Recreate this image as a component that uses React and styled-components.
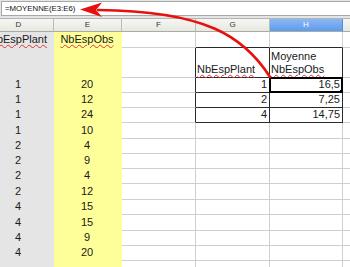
import React from 'react';
import styled, { createGlobalStyle } from 'styled-components';

const GlobalStyle = createGlobalStyle`
  html, body {
    margin: 0;
    padding: 0;
    background: #fff;
  }
  body {
    font-family: "Liberation Sans", Arial, sans-serif;
  }
`;

const Window = styled.div`
  position: relative;
  width: 350px;
  height: 267px;
  overflow: hidden;
  background: #fff;
`;

const FormulaBar = styled.div`
  background: #e4e4e4;
  padding: 1px 0 2px 1px;
  border-bottom: 1px solid #b4b4b4;
`;

const FormulaInput = styled.div`
  height: 13px;
  margin-right: -2px;
  border: 1px solid #a8a8a8;
  background: #fff;
  font-size: 7.8px;
  line-height: 13px;
  padding-left: 3px;
  color: #111;
`;

const Sheet = styled.div`
  display: grid;
  grid-template-columns: 70px 68px 74px 74px 73px 60px;
  margin-left: -16px;
  width: 419px;
`;

const ColHead = styled.div`
  height: 13px;
  box-sizing: border-box;
  border-right: 1px solid ${p => (p.$active ? '#4d8de6' : '#b9bcb4')};
  border-bottom: 1px solid #a9aca4;
  background: ${p =>
    p.$active
      ? 'linear-gradient(#8ab8f5, #5f9bec)'
      : 'linear-gradient(#f6f7f3, #e6e8e1)'};
  color: ${p => (p.$active ? '#fff' : '#333')};
  font-size: 8px;
  line-height: 12px;
  text-align: center;
`;

const Cell = styled.div`
  position: relative;
  box-sizing: border-box;
  height: ${p => p.$h}px;
  background: ${p => p.$bg || '#fff'};
  border-right: 1px solid ${p => p.$rb || p.$bg || '#cfcfcf'};
  border-bottom: 1px solid ${p => p.$bb || p.$bg || '#cfcfcf'};
  display: flex;
  flex-direction: column;
  justify-content: flex-end;
  align-items: ${p =>
    p.$align === 'right' ? 'flex-end' : p.$align === 'left' ? 'flex-start' : 'center'};
  padding: 0 2px 1px 1px;
  font-size: 11px;
  line-height: 13px;
  color: #1a1a1a;
  white-space: nowrap;
`;

const Word = styled.span`
  text-decoration: underline wavy #e03030;
  text-decoration-thickness: 1px;
  text-underline-offset: 1px;
`;

const Selection = styled.div`
  position: absolute;
  left: -1px;
  top: -1px;
  right: -1px;
  bottom: -1px;
  border: 2px solid #000;
  pointer-events: none;
`;

const Handle = styled.div`
  position: absolute;
  right: -4px;
  bottom: -4px;
  width: 5px;
  height: 5px;
  background: #000;
`;

const Overlay = styled.svg`
  position: absolute;
  left: 0;
  top: 0;
  pointer-events: none;
`;

const DARK = '#2a2a2a';
const GREY = '#e5e5e5';
const YELLOW = '#ffff99';

const dCol = [1, 1, 1, 1, 2, 2, 2, 2, 4, 4, 4, 4];
const eCol = [20, 12, 24, 10, 4, 9, 4, 12, 15, 15, 9, 20];
const gCol = [1, 2, 4];
const hCol = ['16,5', '7,25', '14,75'];
const heights = [15, 15, 15, 16, 15, 15, 15, 16, 15, 16, 15, 15];

export default function App() {
  const rows = [];

  // titles of the raw data
  rows.push(
    <React.Fragment key="r1">
      <Cell $h={16} $bg={GREY}><Word>NbEspPlant</Word></Cell>
      <Cell $h={16} $bg={YELLOW}><Word>NbEspObs</Word></Cell>
      <Cell $h={16} />
      <Cell $h={16} $bb={DARK} />
      <Cell $h={16} $bb={DARK} />
      <Cell $h={16} />
    </React.Fragment>
  );

  // tall row holding the summary table titles
  rows.push(
    <React.Fragment key="r2">
      <Cell $h={30} $bg={GREY} />
      <Cell $h={30} $bg={YELLOW} />
      <Cell $h={30} $rb={DARK} />
      <Cell $h={30} $rb={DARK} $bb={DARK} $align="left"><Word>NbEspPlant</Word></Cell>
      <Cell $h={30} $rb={DARK} $bb={DARK} $align="left">
        <span>Moyenne</span>
        <Word>NbEspObs</Word>
      </Cell>
      <Cell $h={30} />
    </React.Fragment>
  );

  heights.forEach((h, i) => {
    const inTable = i < 3;
    rows.push(
      <React.Fragment key={'d' + i}>
        <Cell $h={h} $bg={GREY}>{dCol[i]}</Cell>
        <Cell $h={h} $bg={YELLOW}>{eCol[i]}</Cell>
        <Cell $h={h} $rb={inTable ? DARK : undefined} />
        <Cell $h={h} $rb={inTable ? DARK : undefined} $bb={inTable ? DARK : undefined} $align="right">
          {inTable ? gCol[i] : ''}
        </Cell>
        <Cell $h={h} $rb={inTable ? DARK : undefined} $bb={inTable ? DARK : undefined} $align="right">
          {inTable ? hCol[i] : ''}
          {i === 0 && (
            <Selection>
              <Handle />
            </Selection>
          )}
        </Cell>
        <Cell $h={h} />
      </React.Fragment>
    );
  });

  rows.push(
    <React.Fragment key="last">
      <Cell $h={15} $bg={GREY} />
      <Cell $h={15} $bg={YELLOW} />
      <Cell $h={15} />
      <Cell $h={15} />
      <Cell $h={15} />
      <Cell $h={15} />
    </React.Fragment>
  );

  return (
    <>
      <GlobalStyle />
      <Window>
        <FormulaBar>
          <FormulaInput>=MOYENNE(E3:E6)</FormulaInput>
        </FormulaBar>
        <Sheet>
          <ColHead>D</ColHead>
          <ColHead>E</ColHead>
          <ColHead>F</ColHead>
          <ColHead>G</ColHead>
          <ColHead $active>H</ColHead>
          <ColHead />
          {rows}
        </Sheet>
        <Overlay width="350" height="267" viewBox="0 0 350 267">
          <path
            d="M270 77 C 244 36 205 11 98 10"
            fill="none"
            stroke="#e8100c"
            strokeWidth="2.6"
            strokeLinecap="round"
          />
          <path d="M80 9.5 L102 2.5 L96 10 L102 17 Z" fill="#e8100c" />
        </Overlay>
      </Window>
    </>
  );
}
